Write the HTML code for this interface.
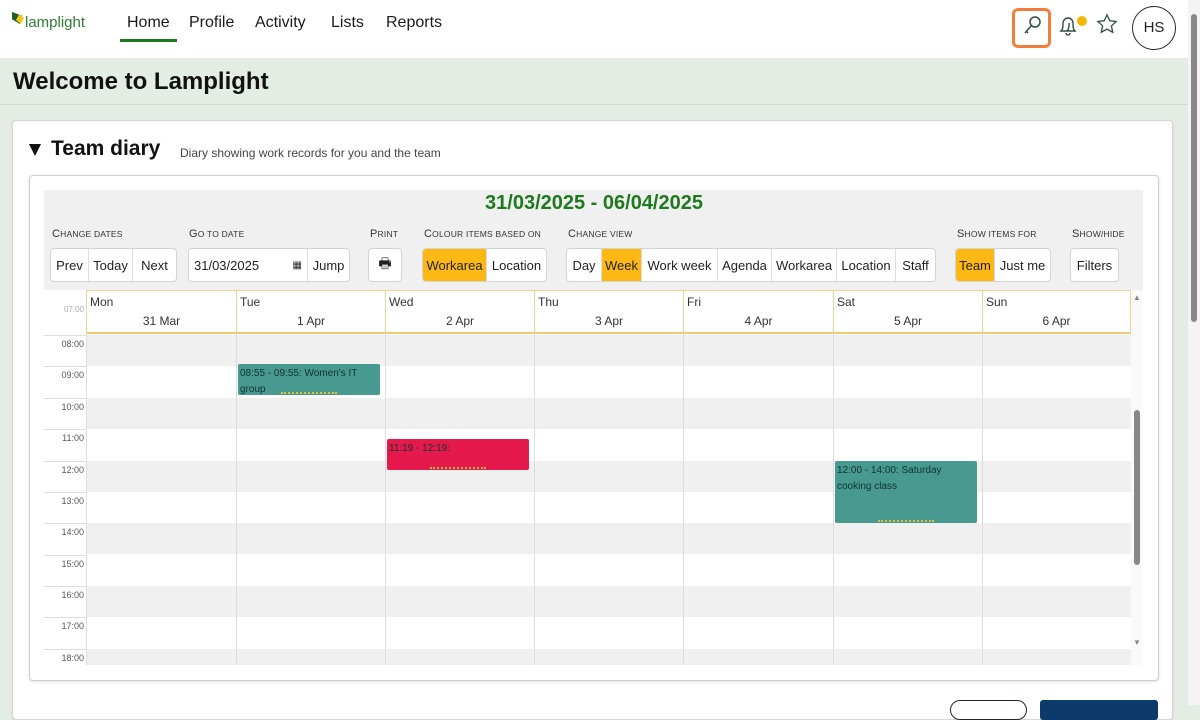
<!DOCTYPE html>
<html><head><meta charset="utf-8"><style>
*{box-sizing:border-box;margin:0;padding:0}
body{width:1200px;height:705px;overflow:hidden;background:#e3ede3;font-family:"Liberation Sans",sans-serif;position:relative;color:#222}
.a{position:absolute}
.hdr{left:0;top:0;width:1188px;height:58px;background:#fff}
.nav{top:14px;font-size:16px;color:#1a1a1a}
.sb{left:1188px;top:0;width:12px;height:705px;background:#f4f4f4}
.lbl{font-size:11px;color:#333;top:228px;letter-spacing:.2px;white-space:nowrap}
.lbl small{font-size:8.5px}
.grp{top:248px;height:34px;border:1px solid #d4d4d4;border-radius:4px;background:#fff;display:flex;overflow:hidden}
.grp span{display:flex;align-items:center;justify-content:center;font-size:13px;border-left:1px solid #ddd;height:100%;white-space:nowrap;flex:none}
.grp span:first-child{border-left:none}
.on{background:#fdb813}
.day{top:290px;height:43px;border-left:1px solid #f7d28e;font-size:12px;color:#333}
.day b{font-weight:normal;position:absolute;left:3px;top:5px}
.day i{font-style:normal;position:absolute;left:0;right:0;top:24px;text-align:center}
.row{left:86px;width:1045px;height:31.4px}
.tl{left:44px;width:42px;font-size:9px;color:#555;text-align:right;padding-right:2px;border-top:1px solid #ddd;height:31.4px;padding-top:3px}
.vl{top:333px;width:1px;height:332px;background:#ddd}
.ev{font-size:10px;color:#133;padding:2px;border-radius:2px;line-height:16px}
.ev:after{content:"";position:absolute;left:30%;width:40%;bottom:1px;border-bottom:2px dotted #e0c040}
</style></head><body>
<div class="a hdr"></div>
<div class="a" style="left:12px;top:12px;width:10px;height:12px;background:#1f5e2a;clip-path:polygon(0 0,100% 30%,80% 100%,0 60%)"></div>
<div class="a" style="left:16px;top:14px;width:8px;height:10px;background:#f5c518;clip-path:polygon(40% 0,100% 40%,60% 100%,0 60%)"></div>
<div class="a" style="left:25px;top:14px;font-size:15px;color:#2e7d32">lamplight</div>
<div class="a nav" style="left:127px">Home</div>
<div class="a" style="left:120px;top:39px;width:57px;height:3px;background:#1b7a1b"></div>
<div class="a nav" style="left:189px">Profile</div>
<div class="a nav" style="left:255px">Activity</div>
<div class="a nav" style="left:331px">Lists</div>
<div class="a nav" style="left:386px">Reports</div>
<div class="a" style="left:1012px;top:8px;width:39px;height:40px;border:3px solid #f47c3c;border-radius:6px"></div>
<svg class="a" style="left:1020px;top:14px" width="24" height="24" viewBox="0 0 24 24" fill="none" stroke="#2f4f3f" stroke-width="1.5"><circle cx="15" cy="8" r="5"/><path d="M11 12l-6 7M6 17l2 2"/></svg>
<svg class="a" style="left:1056px;top:13px" width="28" height="24" viewBox="0 0 28 24" fill="none" stroke="#2f4f3f" stroke-width="1.4"><path d="M5 18c2-2 2-4 2-8a5 5 0 0 1 10 0c0 4 0 6 2 8z"/><path d="M10 20a2 2 0 0 0 4 0"/><path d="M11 18c2-2 2-4 2-8"/></svg>
<div class="a" style="left:1077px;top:16px;width:10px;height:10px;border-radius:50%;background:#f5b800"></div>
<svg class="a" style="left:1096px;top:13px" width="22" height="22" viewBox="0 0 24 24" fill="none" stroke="#2f4f3f" stroke-width="1.4"><path d="M12 2l3 6.5 7 .8-5.2 4.8 1.5 7L12 17.6 5.7 21l1.5-7L2 9.3l7-.8z"/></svg>
<div class="a" style="left:1132px;top:6px;width:44px;height:44px;border:1.5px solid #1a2e1a;border-radius:50%;text-align:center;line-height:41px;font-size:15px">HS</div>
<div class="a sb"><div class="a" style="left:3px;top:14px;width:6px;height:308px;background:#888;border-radius:3px"></div></div>
<div class="a" style="left:13px;top:68px;font-size:24px;font-weight:bold;color:#111">Welcome to Lamplight</div>
<div class="a" style="left:0;top:104px;width:1188px;height:1px;background:#d0dcd0"></div>
<div class="a" style="left:12px;top:120px;width:1161px;height:600px;background:#fff;border:1px solid #d6d6d6;border-radius:4px;box-shadow:0 1px 2px rgba(0,0,0,.1)"></div>
<div class="a" style="left:51px;top:137px;font-size:21px;font-weight:bold;color:#111">Team diary</div>
<div class="a" style="left:29px;top:144px;width:0;height:0;border-left:6px solid transparent;border-right:6px solid transparent;border-top:12px solid #111"></div>
<div class="a" style="left:180px;top:146px;font-size:12px;color:#444">Diary showing work records for you and the team</div>
<div class="a" style="left:29px;top:175px;width:1130px;height:506px;border:1px solid #cfcfcf;border-radius:4px;box-shadow:0 1px 3px rgba(0,0,0,.12);background:#fff"></div>
<div class="a" style="left:44px;top:190px;width:1099px;height:100px;background:#f0f0f0"></div>
<div class="a" style="left:0;width:1188px;top:192px;text-align:center;font-size:20px;font-weight:bold;color:#1e7a1e">31/03/2025 - 06/04/2025</div>
<div class="a lbl" style="left:52px">C<small>HANGE DATES</small></div>
<div class="a lbl" style="left:189px">G<small>O TO DATE</small></div>
<div class="a lbl" style="left:370px">P<small>RINT</small></div>
<div class="a lbl" style="left:424px">C<small>OLOUR ITEMS BASED ON</small></div>
<div class="a lbl" style="left:568px">C<small>HANGE VIEW</small></div>
<div class="a lbl" style="left:957px">S<small>HOW ITEMS FOR</small></div>
<div class="a lbl" style="left:1072px">S<small>HOW/HIDE</small></div>
<div class="a grp" style="left:50px;width:127px"><span style="width:37px">Prev</span><span style="width:44px">Today</span><span style="width:44px">Next</span></div>
<div class="a grp" style="left:188px;width:162px"><span style="width:118px;justify-content:space-between;padding:0 5px">31/03/2025<i style="font-style:normal;font-size:10px">▦</i></span><span style="width:42px">Jump</span></div>
<div class="a grp" style="left:368px;width:34px"><span style="width:32px;font-size:14px">🖶</span></div>
<div class="a grp" style="left:422px;width:125px"><span class="on" style="width:63px">Workarea</span><span style="width:60px">Location</span></div>
<div class="a grp" style="left:566px;width:370px"><span style="width:34px">Day</span><span class="on" style="width:40px">Week</span><span style="width:76px">Work week</span><span style="width:54px">Agenda</span><span style="width:65px">Workarea</span><span style="width:59px">Location</span><span style="width:40px">Staff</span></div>
<div class="a grp" style="left:955px;width:96px"><span class="on" style="width:38px">Team</span><span style="width:56px">Just me</span></div>
<div class="a grp" style="left:1070px;width:49px"><span style="width:47px">Filters</span></div>
<div class="a" style="left:86px;top:290px;width:1045px;height:1px;background:#f7d28e"></div>
<div class="a" style="left:86px;top:332px;width:1045px;height:2px;background:#f7c873"></div>
<div class="a" style="left:44px;top:305px;width:42px;font-size:8px;color:#aaa;text-align:right;padding-right:2px">07:00</div>
<div class="a day" style="left:86px;width:150px"><b>Mon</b><i>31 Mar</i></div>
<div class="a day" style="left:236px;width:149px"><b>Tue</b><i>1 Apr</i></div>
<div class="a day" style="left:385px;width:149px"><b>Wed</b><i>2 Apr</i></div>
<div class="a day" style="left:534px;width:149px"><b>Thu</b><i>3 Apr</i></div>
<div class="a day" style="left:683px;width:150px"><b>Fri</b><i>4 Apr</i></div>
<div class="a day" style="left:833px;width:149px"><b>Sat</b><i>5 Apr</i></div>
<div class="a day" style="left:982px;width:149px;border-right:1px solid #f7d28e"><b>Sun</b><i>6 Apr</i></div>
<div class="a row" style="top:335px;background:#f0f0f0"></div>
<div class="a row" style="top:398px;background:#f0f0f0"></div>
<div class="a row" style="top:461px;background:#f0f0f0"></div>
<div class="a row" style="top:523px;background:#f0f0f0"></div>
<div class="a row" style="top:586px;background:#f0f0f0"></div>
<div class="a row" style="top:649px;height:16px;background:#f0f0f0"></div>
<div class="a tl" style="top:335px">08:00</div>
<div class="a tl" style="top:366px">09:00</div>
<div class="a tl" style="top:398px">10:00</div>
<div class="a tl" style="top:429px">11:00</div>
<div class="a tl" style="top:461px">12:00</div>
<div class="a tl" style="top:492px">13:00</div>
<div class="a tl" style="top:523px">14:00</div>
<div class="a tl" style="top:555px">15:00</div>
<div class="a tl" style="top:586px">16:00</div>
<div class="a tl" style="top:617px">17:00</div>
<div class="a tl" style="top:649px;height:16px">18:00</div>
<div class="a vl" style="left:86px"></div><div class="a vl" style="left:236px"></div><div class="a vl" style="left:385px"></div><div class="a vl" style="left:534px"></div><div class="a vl" style="left:683px"></div><div class="a vl" style="left:833px"></div><div class="a vl" style="left:982px"></div>
<div class="a" style="left:1131px;top:290px;width:12px;height:375px;background:#fafafa"></div>
<div class="a" style="left:1133px;top:293px;font-size:8px;color:#888">▲</div>
<div class="a" style="left:1133px;top:638px;font-size:8px;color:#888">▼</div>
<div class="a" style="left:1134px;top:410px;width:6px;height:155px;background:#888;border-radius:3px"></div>
<div class="a ev" style="left:238px;top:364px;width:142px;height:31px;background:#48998f">08:55 - 09:55: Women's IT group</div>
<div class="a ev" style="left:387px;top:439px;width:142px;height:31px;background:#e5194b">11:19 - 12:19:</div>
<div class="a ev" style="left:835px;top:461px;width:142px;height:62px;background:#48998f">12:00 - 14:00: Saturday cooking class</div>
<div class="a" style="left:950px;top:700px;width:77px;height:20px;border:1.5px solid #1a2e1a;border-radius:12px;background:#fff"></div>
<div class="a" style="left:1040px;top:700px;width:118px;height:20px;background:#0c3a6b;border-radius:3px"></div>
</body></html>
